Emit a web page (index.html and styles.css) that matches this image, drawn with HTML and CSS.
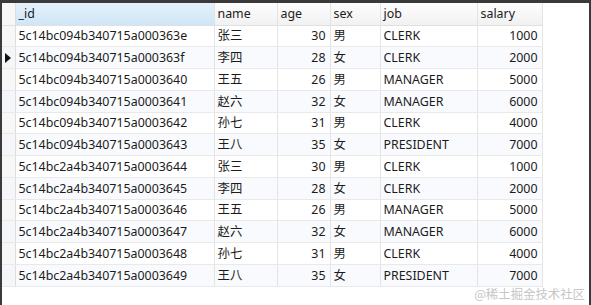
FILE: index.html
```html
<!DOCTYPE html>
<html>
<head>
<meta charset="utf-8">
<link rel="stylesheet" href="styles.css">
</head>
<body>
<div class="frame">
  <table class="grid">
    <colgroup>
      <col class="c-ind"><col class="c-id"><col class="c-name"><col class="c-age"><col class="c-sex"><col class="c-job"><col class="c-sal">
    </colgroup>
    <thead>
      <tr>
        <th class="ind"></th>
        <th class="sel">_id</th>
        <th>name</th>
        <th>age</th>
        <th>sex</th>
        <th>job</th>
        <th>salary</th>
      </tr>
    </thead>
    <tbody>
      <tr><td class="ind"></td><td>5c14bc094b340715a000363e</td><td>张三</td><td class="num">30</td><td>男</td><td>CLERK</td><td class="num">1000</td></tr>
      <tr class="alt"><td class="ind"><svg class="arrow" width="6" height="10" viewBox="0 0 6 10"><path d="M0 0 L6 5 L0 10 Z" fill="#111"/></svg></td><td>5c14bc094b340715a000363f</td><td>李四</td><td class="num">28</td><td>女</td><td>CLERK</td><td class="num">2000</td></tr>
      <tr><td class="ind"></td><td>5c14bc094b340715a0003640</td><td>王五</td><td class="num">26</td><td>男</td><td>MANAGER</td><td class="num">5000</td></tr>
      <tr class="alt"><td class="ind"></td><td>5c14bc094b340715a0003641</td><td>赵六</td><td class="num">32</td><td>女</td><td>MANAGER</td><td class="num">6000</td></tr>
      <tr><td class="ind"></td><td>5c14bc094b340715a0003642</td><td>孙七</td><td class="num">31</td><td>男</td><td>CLERK</td><td class="num">4000</td></tr>
      <tr class="alt"><td class="ind"></td><td>5c14bc094b340715a0003643</td><td>王八</td><td class="num">35</td><td>女</td><td>PRESIDENT</td><td class="num">7000</td></tr>
      <tr><td class="ind"></td><td>5c14bc2a4b340715a0003644</td><td>张三</td><td class="num">30</td><td>男</td><td>CLERK</td><td class="num">1000</td></tr>
      <tr class="alt"><td class="ind"></td><td>5c14bc2a4b340715a0003645</td><td>李四</td><td class="num">28</td><td>女</td><td>CLERK</td><td class="num">2000</td></tr>
      <tr><td class="ind"></td><td>5c14bc2a4b340715a0003646</td><td>王五</td><td class="num">26</td><td>男</td><td>MANAGER</td><td class="num">5000</td></tr>
      <tr class="alt"><td class="ind"></td><td>5c14bc2a4b340715a0003647</td><td>赵六</td><td class="num">32</td><td>女</td><td>MANAGER</td><td class="num">6000</td></tr>
      <tr><td class="ind"></td><td>5c14bc2a4b340715a0003648</td><td>孙七</td><td class="num">31</td><td>男</td><td>CLERK</td><td class="num">4000</td></tr>
      <tr class="alt"><td class="ind"></td><td>5c14bc2a4b340715a0003649</td><td>王八</td><td class="num">35</td><td>女</td><td>PRESIDENT</td><td class="num">7000</td></tr>
    </tbody>
  </table>
  <div class="watermark">@稀土掘金技术社区</div>
</div>
</body>
</html>
```

FILE: styles.css
```css
html, body {
  margin: 0;
  padding: 0;
  background: #ffffff;
}

.frame {
  position: relative;
  box-sizing: border-box;
  width: 591px;
  height: 305px;
  border-top: 3px solid #3a3a3a;
  border-left: 2px solid #3a3a3a;
  border-right: 2px solid #3a3a3a;
  background: #ffffff;
  overflow: hidden;
  font-family: "Noto Sans", "Noto Sans CJK SC", sans-serif;
  font-size: 12.4px;
  color: #1b1b1b;
}

.grid {
  border-collapse: collapse;
  table-layout: fixed;
  width: 540px;
}

.c-ind { width: 13px; }
.c-id { width: 199px; }
.c-name { width: 63px; }
.c-age { width: 53px; }
.c-sex { width: 50px; }
.c-job { width: 97px; }
.c-sal { width: 65px; }

.grid th,
.grid td {
  box-sizing: border-box;
  padding: 1px 3px 0;
  border-right: 1px solid #e4e4e4;
  border-bottom: 1px solid #e9e9e9;
  white-space: nowrap;
  overflow: hidden;
  text-align: left;
  font-weight: normal;
  line-height: 16px;
}

.grid th {
  height: 22px;
  background: linear-gradient(#fdfdfd, #f1f1f1);
  border-bottom: 1px solid #e0e0e0;
}

.grid th.sel {
  background: linear-gradient(#e4f1fb, #cfe6f7);
}

.grid td {
  height: 21.75px;
}

.grid tr.alt td {
  background: #f8fafd;
}

.grid .ind {
  padding: 0;
  background: #f7f7f7;
  border-right: 1px solid #dedede;
  text-align: center;
}

.grid tr.alt td.ind {
  background: #f4f6f9;
}

.arrow {
  display: block;
  margin: 0 0 0 3px;
}

.grid td.num {
  text-align: right;
  padding-right: 4px;
}

.watermark {
  position: absolute;
  right: 4px;
  bottom: 2px;
  font-size: 12.4px;
  color: #c6c6c6;
  font-family: "Noto Sans CJK SC", sans-serif;
}
```
